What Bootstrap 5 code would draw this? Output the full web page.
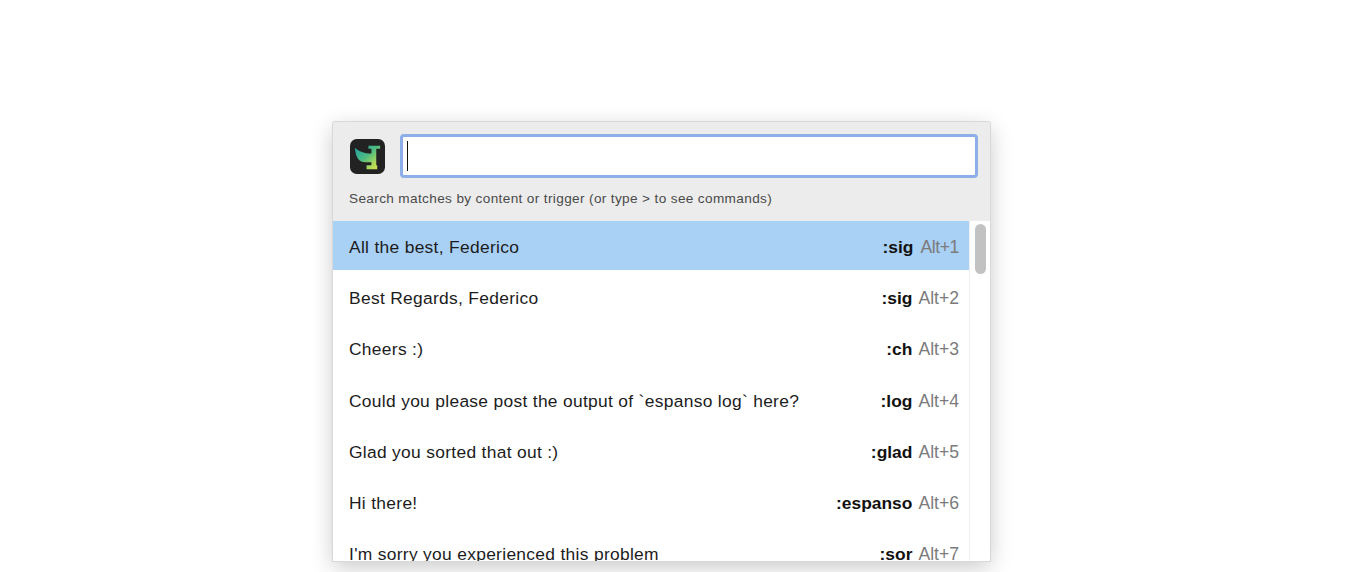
<!DOCTYPE html>
<html lang="en">
<head>
<meta charset="utf-8">
<title>Search</title>
<link href="https://cdn.jsdelivr.net/npm/bootstrap@5.3.0/dist/css/bootstrap.min.css" rel="stylesheet">
<style>
html, body { height: 100%; overflow: hidden; background: #fff; }
body { font-family: "Liberation Sans", Arial, sans-serif; color: #1c1c1c; padding-top: 122px; }
.win { width: 657px; height: 439px; margin-left: 333px; background: #fff; overflow: hidden; box-shadow: 0 0 0 1px #d8d8d8, 0 6px 22px rgba(0,0,0,.22); border-radius: 2px 2px 0 0; }
.head { background: #ececec; height: 99px; padding: 12px 12px 0 17px; }
.logo { width: 35px; height: 35px; flex: none; margin-right: 15px; margin-top: 5px; }
.field { height: 44px; flex: 1; background: #fff; border: 3px solid #8eaeea; border-radius: 4px; padding: 4px 4px; }
.caret-bar { width: 1px; height: 30px; background: #111; }
.hint { font-size: 13.6px; letter-spacing: .36px; color: #4a4a4a; margin-top: 13px; margin-left: -1px; line-height: 16px; }
.listing { height: 340px; overflow: hidden; }
.rows { flex: 1; min-width: 0; }
.entry { height: 49px; margin-bottom: 2.25px; padding: 3px 10px 0 16px; font-size: 17.4px; letter-spacing: .31px; }
.entry.sel { background: #a9d0f5; }
.trig { font-size: 17.4px; font-weight: 700; letter-spacing: 0; color: #111; }
.alt { font-size: 17.6px; color: #7b7b7b; letter-spacing: 0; margin-left: 6px; }
.alt-one { letter-spacing: -.4px; margin-left: 7px; }
.track { width: 21px; flex: none; border-left: 1px solid #f0f0f0; padding: 3px 4px 0 5px; }
.thumb { height: 50px; background: #c2c2c2; border-radius: 6px; }
</style>
</head>
<body>
<div class="win">
  <div class="head">
    <div class="d-flex">
      <svg class="logo" viewBox="0 0 36 36" aria-hidden="true">
        <defs><linearGradient id="g" x1="0" y1="0" x2="1" y2="1"><stop offset="0" stop-color="#1f9fa6"/><stop offset=".45" stop-color="#4dbb82"/><stop offset=".75" stop-color="#a9d85a"/><stop offset="1" stop-color="#e6e24a"/></linearGradient></defs>
        <rect width="36" height="36" rx="7" fill="#222"/>
        <path d="M5 9c4 4 10 6 17 6v-5h-3V7h12v3h-4v17h1v4H17v-4h5v-3h-6c-7 0-10-5-11-15z" fill="url(#g)"/>
      </svg>
      <div class="field"><div class="caret-bar"></div></div>
    </div>
    <div class="hint">Search matches by content or trigger (or type &gt; to see commands)</div>
  </div>
  <div class="listing d-flex">
    <div class="rows">
      <div class="entry sel d-flex align-items-center justify-content-between"><span>All the best, Federico</span><span><span class="trig">:sig</span><span class="alt alt-one">Alt+1</span></span></div>
      <div class="entry d-flex align-items-center justify-content-between"><span>Best Regards, Federico</span><span><span class="trig">:sig</span><span class="alt">Alt+2</span></span></div>
      <div class="entry d-flex align-items-center justify-content-between"><span>Cheers :)</span><span><span class="trig">:ch</span><span class="alt">Alt+3</span></span></div>
      <div class="entry d-flex align-items-center justify-content-between"><span>Could you please post the output of `espanso log` here?</span><span><span class="trig">:log</span><span class="alt">Alt+4</span></span></div>
      <div class="entry d-flex align-items-center justify-content-between"><span>Glad you sorted that out :)</span><span><span class="trig">:glad</span><span class="alt">Alt+5</span></span></div>
      <div class="entry d-flex align-items-center justify-content-between"><span>Hi there!</span><span><span class="trig">:espanso</span><span class="alt">Alt+6</span></span></div>
      <div class="entry d-flex align-items-center justify-content-between"><span>I'm sorry you experienced this problem</span><span><span class="trig">:sor</span><span class="alt">Alt+7</span></span></div>
    </div>
    <div class="track"><div class="thumb"></div></div>
  </div>
</div>
<script src="https://cdn.jsdelivr.net/npm/bootstrap@5.3.0/dist/js/bootstrap.bundle.min.js"></script>
</body>
</html>
